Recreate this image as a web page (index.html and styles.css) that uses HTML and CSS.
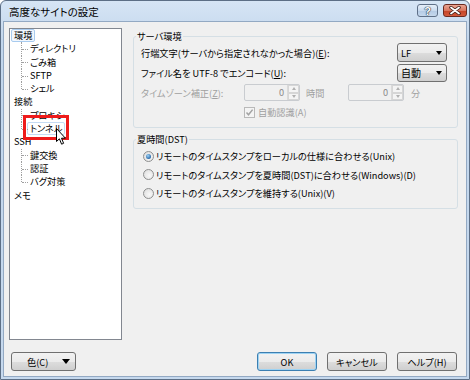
FILE: index.html
```html
<!DOCTYPE html>
<html lang="ja">
<head>
    <meta charset="UTF-8">
    <title>高度なサイトの設定</title>
    <link rel="stylesheet" href="styles.css">
</head>
<body>
    <div class="window">
        <div class="titlebar">
            <span class="title">高度なサイトの設定</span>
            <div class="caption-btns">
                <span class="cap cap-help">?</span>
                <span class="cap cap-close">
                    <svg width="12" height="9" viewBox="0 0 12 9">
                        <path d="M2 1.5 L10 7.5 M10 1.5 L2 7.5" stroke="#3a1a14" stroke-width="3.4" stroke-linecap="round"/>
                        <path d="M2 1.5 L10 7.5 M10 1.5 L2 7.5" stroke="#fff" stroke-width="1.8" stroke-linecap="round"/>
                    </svg>
                </span>
            </div>
        </div>

        <div class="client">
            <div class="main">
                <ul class="tree">
                    <li class="node"><span class="item sel">環境</span>
                        <ul class="children">
                            <li><span class="item">ディレクトリ</span></li>
                            <li><span class="item">ごみ箱</span></li>
                            <li><span class="item">SFTP</span></li>
                            <li><span class="item">シェル</span></li>
                        </ul>
                    </li>
                    <li class="node"><span class="item">接続</span>
                        <ul class="children">
                            <li><span class="item">プロキシ</span></li>
                            <li><span class="item hot">トンネル</span></li>
                        </ul>
                    </li>
                    <li class="node"><span class="item">SSH</span>
                        <ul class="children">
                            <li><span class="item">鍵交換</span></li>
                            <li><span class="item">認証</span></li>
                            <li><span class="item">バグ対策</span></li>
                        </ul>
                    </li>
                    <li class="node"><span class="item">メモ</span></li>

                    <!-- 注目枠とマウスカーソル -->
                    <div class="mark"></div>
                    <svg class="cursor" width="11" height="18" viewBox="0 0 11 18">
                        <path d="M0.5 0.5 L0.5 13.5 L3.4 10.8 L5.6 16.2 L7.6 15.3 L5.5 10.2 L9.4 10.2 Z" fill="#fff" stroke="#000" stroke-width="1" stroke-linejoin="round"/>
                    </svg>
                </ul>

                <div class="pages">
                    <fieldset class="group server">
                        <legend>サーバ環境</legend>
                        <div class="row r1">
                            <span>行端文字(サーバから指定されなかった場合)(<u>E</u>):</span>
                            <div class="combo"><span>LF</span><i class="arrow"></i></div>
                        </div>
                        <div class="row r2">
                            <span>ファイル名を UTF-8 でエンコード(<u>U</u>):</span>
                            <div class="combo"><span>自動</span><i class="arrow"></i></div>
                        </div>
                        <div class="row r3 disabled">
                            <span class="tz-label">タイムゾーン補正(<u>Z</u>):</span>
                            <div class="spin">
                                <span class="spin-val">0</span>
                                <span class="spin-btns"><i class="up"></i><i class="down"></i></span>
                            </div>
                            <span class="unit">時間</span>
                            <div class="spin">
                                <span class="spin-val">0</span>
                                <span class="spin-btns"><i class="up"></i><i class="down"></i></span>
                            </div>
                            <span class="unit-min">分</span>
                        </div>
                        <div class="row r4 disabled">
                            <span class="check">
                                <svg width="9" height="9" viewBox="0 0 9 9">
                                    <path d="M1.5 4.5 L3.5 6.8 L7.6 1.6" fill="none" stroke="#a3a3a3" stroke-width="1.5"/>
                                </svg>
                            </span>
                            <span>自動認識(A)</span>
                        </div>
                    </fieldset>

                    <fieldset class="group dst">
                        <legend>夏時間(DST)</legend>
                        <label class="radio-row"><span class="radio on"></span>リモートのタイムスタンプをローカルの仕様に合わせる(Unix)</label>
                        <label class="radio-row"><span class="radio"></span>リモートのタイムスタンプを夏時間(DST)に合わせる(Windows)(D)</label>
                        <label class="radio-row"><span class="radio"></span>リモートのタイムスタンプを維持する(Unix)(V)</label>
                    </fieldset>
                </div>
            </div>

            <div class="footer">
                <button class="btn btn-color">色(C)<i class="arrow"></i></button>
                <div class="actions">
                    <button class="btn btn-default">OK</button>
                    <button class="btn">キャンセル</button>
                    <button class="btn">ヘルプ(H)</button>
                </div>
            </div>
        </div>
    </div>
</body>
</html>
```

FILE: styles.css
```css
* {
    margin: 0;
    padding: 0;
    box-sizing: border-box;
}

html, body {
    width: 470px;
    height: 380px;
    overflow: hidden;
}

body {
    font-family: "Noto Sans CJK JP", "Noto Sans", sans-serif;
    font-size: 9.2px;
    color: #000;
    font-feature-settings: "palt";
    background: #fff;
}

/* ウィンドウ枠 */
.window {
    width: 470px;
    height: 380px;
    border: 1px solid #5d6f86;
    border-radius: 6px 6px 0 0;
    background: linear-gradient(#d6e5f5, #c2d6ec 40px, #c6d9ee);
    padding: 0 2px 2px 2px;
    display: flex;
    flex-direction: column;
}

.titlebar {
    height: 20px;
    display: flex;
    align-items: flex-start;
    padding: 3px 0 0 6px;
}

.title {
    font-size: 10.5px;
    line-height: 14px;
    margin-top: 1px;
}

.caption-btns {
    margin-left: auto;
    display: flex;
    gap: 5px;
}

.cap {
    height: 13px;
    border: 1px solid #5f7088;
    border-radius: 3px;
    display: flex;
    align-items: center;
    justify-content: center;
}

.cap-help {
    width: 21px;
    background: linear-gradient(#e6eff9, #c9daee 50%, #b3cae4 51%, #c6d8ed);
    color: #fff;
    font-family: "Liberation Sans", sans-serif;
    font-weight: bold;
    font-size: 11px;
    text-shadow: 0 0 1px #243447, 0 0 1px #243447, 0 0 1px #243447;
}

.cap-close {
    width: 24px;
    border-color: #6c2a20;
    background: linear-gradient(#eaa594, #d9765f 50%, #c54428 51%, #d2593b);
}

.client {
    flex: 1;
    background: #f0f0f0;
    border: 1px solid #93a9c3;
    display: flex;
    flex-direction: column;
    padding: 6px 8px 5px 5px;
}

.main {
    height: 312px;
    display: flex;
}

/* ツリー */
.tree {
    width: 113px;
    height: 312px;
    border: 1px solid #828790;
    background: #fff;
    list-style: none;
    position: relative;
}

.tree li {
    list-style: none;
    line-height: 13.3px;
}

.item {
    display: inline-block;
    vertical-align: top;
    height: 13.3px;
    padding: 0 2px;
    border: 1px solid transparent;
    line-height: 11.3px;
}

.node > .item {
    margin-left: 1px;
}

.item.sel {
    border-color: #a8cbef;
    background: #f2f7fd;
    border-radius: 2px;
}

.item.hot {
    border-color: #c5dbf3;
    border-radius: 2px;
}

.children > li {
    position: relative;
    padding-left: 17px;
}

.children > li::before {
    content: "";
    position: absolute;
    left: 11px;
    top: 0;
    bottom: 0;
    border-left: 1px dotted #a0a0a0;
}

.children > li:last-child::before {
    bottom: 50%;
}

.children > li::after {
    content: "";
    position: absolute;
    left: 12px;
    width: 6px;
    top: 50%;
    border-top: 1px dotted #a0a0a0;
}

.mark {
    position: absolute;
    left: 13px;
    top: 86px;
    width: 46px;
    height: 25px;
    border: 3px solid #ee1b1b;
}

.cursor {
    position: absolute;
    left: 46px;
    top: 99px;
}

/* 右側のページ */
.pages {
    flex: 1;
    margin-left: 11px;
    margin-top: 2px;
}

.group {
    border: 1px solid #d5dfe5;
    border-radius: 3px;
    padding: 0 10px 6px 7px;
}

.group legend {
    margin-left: -5px;
    padding: 0 1px;
    line-height: 12px;
}

.row {
    display: flex;
    align-items: center;
}

.r1 { height: 21px; }
.r2 { height: 19px; }
.r3 { height: 21px; }
.r4 { height: 18px; }

.disabled {
    color: #a0a0a0;
}

.combo {
    margin-left: auto;
    width: 50px;
    height: 19px;
    border: 1px solid #707070;
    border-radius: 3px;
    background: linear-gradient(#f2f2f2, #ebebeb 50%, #dddddd 51%, #cfcfcf);
    display: flex;
    align-items: center;
    padding: 0 4px 0 3px;
}

.r2 .combo {
    height: 18px;
    font-size: 10px;
}

.arrow {
    margin-left: auto;
    width: 0;
    height: 0;
    border-left: 3.5px solid transparent;
    border-right: 3.5px solid transparent;
    border-top: 4px solid #000;
}

.tz-label {
    width: 103px;
}

.spin {
    width: 56px;
    height: 17px;
    border: 1px solid #c9ccd0;
    border-radius: 2px;
    background: #f0f0f0;
    display: flex;
    align-items: stretch;
}

.spin-val {
    flex: 1;
    text-align: right;
    padding-right: 3px;
    line-height: 15px;
    color: #8a8a8a;
}

.spin-btns {
    width: 12px;
    display: flex;
    flex-direction: column;
    border-left: 1px solid #dadada;
}

.spin-btns i {
    flex: 1;
    display: flex;
    align-items: center;
    justify-content: center;
    border: 1px solid #d6d6d6;
    background: #f4f4f4;
}

.spin-btns .up::after {
    content: "";
    border-left: 2.5px solid transparent;
    border-right: 2.5px solid transparent;
    border-bottom: 3px solid #b0b0b0;
}

.spin-btns .down::after {
    content: "";
    border-left: 2.5px solid transparent;
    border-right: 2.5px solid transparent;
    border-top: 3px solid #b0b0b0;
}

.unit {
    width: 48px;
    padding-left: 6px;
}

.unit-min {
    padding-left: 7px;
}

.r4 {
    padding-left: 103px;
}

.check {
    width: 11px;
    height: 11px;
    border: 1px solid #b9b9b9;
    background: #f4f4f4;
    display: flex;
    align-items: center;
    justify-content: center;
    margin-right: 3px;
}

/* 夏時間 */
.dst {
    margin-top: 5px;
    padding: 2px 10px 5px 9px;
}

.dst legend {
    margin-left: -7px;
}

.radio-row {
    display: flex;
    align-items: center;
    height: 18.5px;
}

.radio {
    width: 11px;
    height: 11px;
    border: 1px solid #8e8f8f;
    border-radius: 50%;
    background: radial-gradient(circle at 60% 60%, #f8f8f8, #dadada);
    margin-right: 2px;
    display: flex;
    align-items: center;
    justify-content: center;
}

.radio.on::after {
    content: "";
    width: 5px;
    height: 5px;
    border-radius: 50%;
    background: radial-gradient(circle at 40% 35%, #9fd3f7, #2a6aa9 70%, #1b4f86);
}

/* 下部ボタン */
.footer {
    display: flex;
    align-items: flex-start;
    padding-top: 12px;
}

.btn {
    font-family: inherit;
    font-size: 9.2px;
    font-feature-settings: "palt";
    height: 19px;
    width: 60px;
    border: 1px solid #707070;
    border-radius: 3px;
    background: linear-gradient(#f2f2f2, #ebebeb 50%, #dddddd 51%, #cfcfcf);
    color: #000;
    display: flex;
    align-items: center;
    justify-content: center;
}

.btn-color {
    width: 65px;
    margin-left: 2px;
    padding: 0 5px 0 0;
    justify-content: flex-start;
}

.btn-color::before {
    content: "";
    width: 15px;
}

.btn-color .arrow {
    border-left-width: 4px;
    border-right-width: 4px;
    border-top-width: 5px;
}

.actions {
    margin-left: auto;
    margin-right: 1px;
    display: flex;
    gap: 10px;
}

.btn-default {
    border-color: #3c7fb1;
    box-shadow: inset 0 0 0 1px #9ed3f3;
}
```
